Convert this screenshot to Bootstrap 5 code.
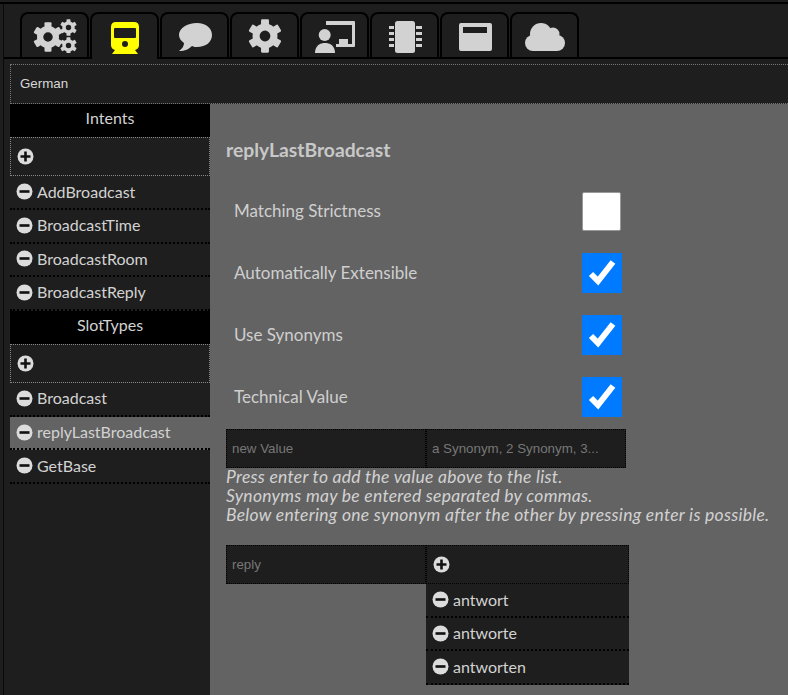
<!DOCTYPE html>
<html>
<head>
    <meta charset="UTF-8">
    <link href="https://cdn.jsdelivr.net/npm/bootstrap@5.3.0/dist/css/bootstrap.min.css" rel="stylesheet">
    <style>
        html, body { height: 100%; }
        body {
            background: #1e1e1e;
            color: #d2d2d2;
            font-family: Lato, "Liberation Sans", sans-serif;
            font-size: 16px;
            overflow: hidden;
        }
        .app-frame {
            height: 691px;
            padding: 0 0 0 10px;
            border-left: 1px solid #0a0a0a;
            margin-left: 3px;
        }
        .app-top-rule { border-top: 2px solid #000; margin-top: 2px; }
        .tab-row { padding: 8px 0 0 16px; height: 55px; border-bottom: 2px solid #000; margin-left: -10px; }
        .tab-item {
            width: 69px;
            height: 45px;
            border: 2px solid #000;
            border-bottom: 0;
            border-radius: 8px 8px 0 0;
            margin-right: 1px;
            background: #1e1e1e;
        }
        .tab-item.is-active { height: 47px; margin-bottom: -2px; position: relative; z-index: 1; }
        .tab-item svg { width: 46px; height: 34px; fill: #d2d2d2; }
        .tab-item.is-active svg { fill: #ff0; }
        .lang-bar {
            height: 40px;
            margin-top: 5px;
            margin-left: -4px;
            padding-left: 9px;
            border-top: 1px dotted #777;
            border-left: 1px dotted #777;
            border-bottom: 1px dotted #777;
            font-family: "Liberation Sans", sans-serif;
            font-size: 13.33px;
            color: #d8d8d8;
        }
        .main-row { height: 592px; margin-left: -4px; }
        .side-col { width: 200px; flex: none; }
        .content-col { background: #636363; padding: 34px 0 0 16px; }
        .side-head {
            background: #000;
            height: 32.8px;
            line-height: 27px;
            text-align: center;
        }
        .side-add {
            height: 39.6px;
            border: 1px dotted #888;
            padding-left: 6px;
        }
        .side-item {
            height: 33.6px;
            padding-left: 6px;
            padding-bottom: 1px;
            border-bottom: 2px dotted #000;
            gap: 4px;
            white-space: nowrap;
        }
        .side-item.is-current { background: #636363; }
        .round-icon { width: 17px; height: 17px; flex: none; }
        .slot-title {
            font-size: 19.3px;
            font-weight: 700;
            color: #c8c8c8;
            margin: 0 0 29px;
            line-height: 24px;
        }
        .opt-row {
            height: 40px;
            margin-bottom: 22px;
            padding-left: 8px;
            width: 396px;
            color: #cfcfcf;
            font-size: 17px;
        }
        .opt-box {
            width: 39px;
            height: 39px;
            margin-right: 1px;
            background: #fff;
            border: 1px solid #999;
            border-radius: 2px;
            flex: none;
        }
        .opt-box.is-on { width: 40px; height: 40px; margin-right: 0; background: #007bff; border: 0; border-radius: 0; }
        .opt-box svg { width: 40px; height: 40px; display: block; }
        .value-row { margin-top: -10px; }
        .value-cell {
            width: 200px;
            height: 39px;
            background: #1e1e1e;
            border: 1px dotted #000;
            padding-left: 5px;
            font-family: "Liberation Sans", sans-serif;
            font-size: 13.33px;
            color: #777;
            line-height: 37px;
        }
        .hint-text { font-style: italic; line-height: 19px; color: #d2d2d2; font-size: 17.5px; letter-spacing: .27px; white-space: nowrap; margin: -1px 0 21px; }
        .syn-col { width: 203px; }
        .syn-add { height: 39px; background: #1e1e1e; border: 1px dotted #000; padding-left: 6px; }
        .syn-item {
            height: 33.6px;
            background: #1e1e1e;
            border-bottom: 2px dotted #000;
            padding-left: 6px;
            gap: 4px;
        }
    </style>
</head>
<body>
    <svg width="0" height="0" class="position-absolute">
        <symbol id="ico-plus" viewBox="0 0 17 17"><circle cx="8.500" cy="8.500" r="8" fill="#dcdcdc"/><path d="M3.500 7.200h3.700V3.500h2.600v3.700h3.700v2.600H9.800v3.700H7.200V9.800H3.500z" fill="#111"/></symbol>
        <symbol id="ico-minus" viewBox="0 0 17 17"><circle cx="8.500" cy="8.500" r="8" fill="#dcdcdc"/><rect x="3.500" y="7.200" width="10" height="2.600" fill="#111"/></symbol>
        <symbol id="ico-gear" viewBox="-12 -12 24 24">
            <path fill-rule="evenodd" d="M0-8.800a8.800 8.800 0 1 1 0 17.600A8.800 8.800 0 1 1 0-8.800zM0-3.800a3.800 3.800 0 1 0 0 7.600 3.800 3.800 0 0 0 0-7.600z"/>
            <rect x="-2.800" y="-11.800" width="5.600" height="5" rx=".8"/>
            <rect x="-2.800" y="-11.800" width="5.600" height="5" rx=".8" transform="rotate(60)"/>
            <rect x="-2.800" y="-11.800" width="5.600" height="5" rx=".8" transform="rotate(120)"/>
            <rect x="-2.800" y="-11.800" width="5.600" height="5" rx=".8" transform="rotate(180)"/>
            <rect x="-2.800" y="-11.800" width="5.600" height="5" rx=".8" transform="rotate(240)"/>
            <rect x="-2.800" y="-11.800" width="5.600" height="5" rx=".8" transform="rotate(300)"/>
        </symbol>
    </svg>
    <div class="app-top-rule"></div>
    <div class="app-frame">
        <div class="tab-row d-flex align-items-end">
            <div class="tab-item d-flex align-items-center justify-content-center">
                <svg viewBox="0 0 46 34"><use href="#ico-gear" x="1" y="3" width="30" height="30"/><use href="#ico-gear" x="28" y="0" width="17" height="17"/><use href="#ico-gear" x="28" y="18" width="17" height="17"/></svg>
            </div>
            <div class="tab-item is-active d-flex align-items-center justify-content-center">
                <svg viewBox="0 0 46 34"><path fill-rule="evenodd" d="M14 2h18q5 0 5 5v18q0 4-4 5l3 4H10l3-4q-4-1-4-5V7q0-5 5-5zm-1 6q-1 0-1 1v8q0 1 1 1h20q1 0 1-1V9q0-1-1-1zm10 13a3 3 0 1 0 0 6 3 3 0 0 0 0-6z"/></svg>
            </div>
            <div class="tab-item d-flex align-items-center justify-content-center">
                <svg viewBox="0 0 46 34"><path d="M25 4c9 0 15 5 15 12s-6 12-15 12c-2 0-3 0-5-1-3 3-7 5-13 5 3-2 5-5 5-8-3-2-5-5-5-8C7 9 15 4 25 4z"/></svg>
            </div>
            <div class="tab-item d-flex align-items-center justify-content-center">
                <svg viewBox="0 0 46 34"><use href="#ico-gear" x="6" y="0" width="34" height="34"/></svg>
            </div>
            <div class="tab-item d-flex align-items-center justify-content-center">
                <svg viewBox="0 0 46 34"><circle cx="12.700" cy="16" r="6"/><path d="M3 34c0-1 0-10 10-10s10 9 10 10z"/><path d="M14 2h28q1 0 1 1v24q0 1-1 1H24v-3h3v-5h9v5h4V6H14z"/></svg>
            </div>
            <div class="tab-item d-flex align-items-center justify-content-center">
                <svg viewBox="0 0 46 34"><rect x="13" y="2" width="20" height="32" rx="2.500"/><path d="M7 7h5v3H7zM7 13h5v3H7zM7 19h5v3H7zM7 25h5v3H7zM34 7h6v3h-6zM34 13h6v3h-6zM34 19h6v3h-6zM34 25h6v3h-6z"/></svg>
            </div>
            <div class="tab-item d-flex align-items-center justify-content-center">
                <svg viewBox="0 0 46 34"><path fill-rule="evenodd" d="M9 4h29q2 0 2 2v24q0 2-2 2H9q-2 0-2-2V6q0-2 2-2zm2 4v6h24V8z"/></svg>
            </div>
            <div class="tab-item d-flex align-items-center justify-content-center">
                <svg viewBox="0 0 46 34"><circle cx="19" cy="15" r="11"/><circle cx="31" cy="15" r="6.500"/><circle cx="11" cy="24" r="8"/><circle cx="35" cy="24" r="8"/><rect x="11" y="18" width="24" height="14"/></svg>
            </div>
        </div>
        <div class="lang-bar d-flex align-items-center">German</div>
        <div class="main-row d-flex">
            <div class="side-col">
                <div class="side-head">Intents</div>
                <div class="side-add d-flex align-items-center"><svg class="round-icon"><use href="#ico-plus"/></svg></div>
                <div class="side-item d-flex align-items-center"><svg class="round-icon"><use href="#ico-minus"/></svg>AddBroadcast</div>
                <div class="side-item d-flex align-items-center"><svg class="round-icon"><use href="#ico-minus"/></svg>BroadcastTime</div>
                <div class="side-item d-flex align-items-center"><svg class="round-icon"><use href="#ico-minus"/></svg>BroadcastRoom</div>
                <div class="side-item d-flex align-items-center"><svg class="round-icon"><use href="#ico-minus"/></svg>BroadcastReply</div>
                <div class="side-head">SlotTypes</div>
                <div class="side-add d-flex align-items-center"><svg class="round-icon"><use href="#ico-plus"/></svg></div>
                <div class="side-item d-flex align-items-center"><svg class="round-icon"><use href="#ico-minus"/></svg>Broadcast</div>
                <div class="side-item is-current d-flex align-items-center"><svg class="round-icon"><use href="#ico-minus"/></svg>replyLastBroadcast</div>
                <div class="side-item d-flex align-items-center"><svg class="round-icon"><use href="#ico-minus"/></svg>GetBase</div>
            </div>
            <div class="content-col flex-grow-1">
                <h4 class="slot-title">replyLastBroadcast</h4>
                <div class="opt-row d-flex align-items-center justify-content-between">Matching Strictness<span class="opt-box"></span></div>
                <div class="opt-row d-flex align-items-center justify-content-between">Automatically Extensible<span class="opt-box is-on"><svg viewBox="0 0 40 40"><path d="M9 21l7 7L31 9" fill="none" stroke="#fff" stroke-width="6"/></svg></span></div>
                <div class="opt-row d-flex align-items-center justify-content-between">Use Synonyms<span class="opt-box is-on"><svg viewBox="0 0 40 40"><path d="M9 21l7 7L31 9" fill="none" stroke="#fff" stroke-width="6"/></svg></span></div>
                <div class="opt-row d-flex align-items-center justify-content-between">Technical Value<span class="opt-box is-on"><svg viewBox="0 0 40 40"><path d="M9 21l7 7L31 9" fill="none" stroke="#fff" stroke-width="6"/></svg></span></div>
                <div class="d-flex value-row">
                    <div class="value-cell">new Value</div>
                    <div class="value-cell">a Synonym, 2 Synonym, 3...</div>
                </div>
                <p class="hint-text">Press enter to add the value above to the list.<br>Synonyms may be entered separated by commas.<br>Below entering one synonym after the other by pressing enter is possible.</p>
                <div class="d-flex align-items-start">
                    <div class="value-cell">reply</div>
                    <div class="syn-col">
                        <div class="syn-add d-flex align-items-center"><svg class="round-icon"><use href="#ico-plus"/></svg></div>
                        <div class="syn-item d-flex align-items-center"><svg class="round-icon"><use href="#ico-minus"/></svg>antwort</div>
                        <div class="syn-item d-flex align-items-center"><svg class="round-icon"><use href="#ico-minus"/></svg>antworte</div>
                        <div class="syn-item d-flex align-items-center"><svg class="round-icon"><use href="#ico-minus"/></svg>antworten</div>
                    </div>
                </div>
            </div>
        </div>
    </div>
</body>
</html>
